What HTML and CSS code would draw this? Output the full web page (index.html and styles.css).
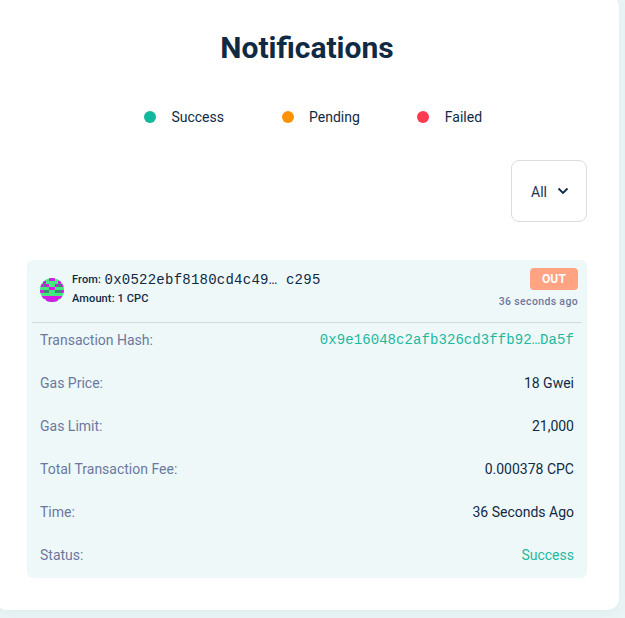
FILE: index.html
```html
<!DOCTYPE html>
<html lang="en">
<head>
<meta charset="utf-8">
<title>Notifications</title>
<link rel="stylesheet" href="styles.css">
</head>
<body>
<main class="panel">
  <h1>Notifications</h1>
  <div class="legend">
    <span class="legend-item success">Success</span>
    <span class="legend-item pending">Pending</span>
    <span class="legend-item failed">Failed</span>
  </div>
  <button class="filter">All
    <svg width="12" height="8" viewBox="0 0 12 8"><path d="M1.500 1.500 6 6l4.500-4.500" fill="none" stroke="#102a43" stroke-width="1.800"/></svg>
  </button>
  <section class="card">
    <header class="card-head">
      <svg class="avatar" viewBox="0 0 8 8" shape-rendering="crispEdges">
        <path fill="#43e87f" d="M0 0h8v8H0z"/>
        <path fill="#d61aea" d="M3 0h2v1H3zM1 1h1v1H1zM6 1h1v1H6zM0 2h1v1H0zM2 2h1v1H2zM5 2h1v1H5zM7 2h1v1H7zM3 3h2v1H3zM0 4h1v1H0zM7 4h1v1H7zM0 6h8v1H0zM2 7h4v1H2z"/>
        <path fill="#3c8a70" d="M1 2h1v1H1zM6 2h1v1H6zM1 4h2v1H1zM5 4h2v1H5z"/>
      </svg>
      <div class="summary">
        <div class="from"><span>From:</span> <span class="address">0x0522ebf8180cd4c49… c295</span></div>
        <div class="amount">Amount: 1 CPC</div>
      </div>
      <div class="meta">
        <span class="badge">OUT</span>
        <span class="age">36 seconds ago</span>
      </div>
    </header>
    <dl class="details">
      <div class="row"><dt>Transaction Hash:</dt><dd class="hash">0x9e16048c2afb326cd3ffb92…Da5f</dd></div>
      <div class="row"><dt>Gas Price:</dt><dd>18 Gwei</dd></div>
      <div class="row"><dt>Gas Limit:</dt><dd>21,000</dd></div>
      <div class="row"><dt>Total Transaction Fee:</dt><dd>0.000378 CPC</dd></div>
      <div class="row"><dt>Time:</dt><dd>36 Seconds Ago</dd></div>
      <div class="row"><dt>Status:</dt><dd class="ok">Success</dd></div>
    </dl>
  </section>
</main>
</body>
</html>
```

FILE: styles.css
```css
* { box-sizing: border-box; }
body {
  margin: 0;
  height: 618px;
  overflow: hidden;
  background: #eaf5f6;
  font: 14px/20px Roboto, sans-serif;
  color: #102a43;
}
.panel {
  width: 624px;
  height: 615px;
  margin: -5px 0 0 -5px;
  padding: 33px 32px 0;
  background: #fff;
  border-radius: 12px;
  box-shadow: 0 4px 16px rgba(16, 80, 90, 0.05);
  display: flex;
  flex-direction: column;
}
h1 {
  margin: 0;
  font-size: 30px;
  line-height: 40px;
  font-weight: 700;
  text-align: center;
}
.legend {
  display: flex;
  justify-content: center;
  gap: 57.5px;
  margin: 39px 0 0 12px;
}
.legend-item { display: flex; align-items: center; gap: 15.5px; }
.legend-item::before {
  content: "";
  width: 12px;
  height: 12px;
  border-radius: 50%;
  background: currentColor;
}
.success::before { background: #13b79b; }
.pending::before { background: #ff9203; }
.failed::before { background: #ff3b52; }
.filter {
  align-self: flex-end;
  width: 76px;
  height: 62px;
  margin-top: 33px;
  padding: 2px 0 0 2px;
  display: flex;
  align-items: center;
  justify-content: center;
  gap: 10px;
  border: 1px solid #dcdcdc;
  border-radius: 8px;
  background: #fff;
  color: #243054;
  font: inherit;
}
.filter svg { margin-top: -3px; }
.card {
  width: 560px;
  height: 318px;
  margin-top: 38px;
  padding: 0 5px;
  border-radius: 6px;
  background: #eff8f9;
}
.card-head {
  display: flex;
  height: 63px;
  padding: 8px 4px 0 8px;
  border-bottom: 1px solid #d5d9dc;
}
.avatar { width: 24px; height: 24px; margin-top: 10px; border-radius: 50%; }
.summary {
  margin-left: 8px;
  font-size: 11px;
  font-weight: 500;
  letter-spacing: 0.12px;
  white-space: nowrap;
}
.from { display: flex; gap: 3.5px; height: 21px; padding-top: 2px; }
.address {
  font: 14px/20px "Liberation Mono", monospace;
  letter-spacing: 0.24px;
}
.meta {
  margin-left: auto;
  display: flex;
  flex-direction: column;
  align-items: flex-end;
}
.badge {
  width: 48px;
  height: 22px;
  border-radius: 4px;
  background: #ffa383;
  color: #fff;
  font-size: 12px;
  line-height: 22px;
  font-weight: 700;
  letter-spacing: 0.2px;
  text-align: center;
}
.age {
  margin-top: 2px;
  color: #6b789e;
  font-size: 10.5px;
  font-weight: 500;
  letter-spacing: 0.35px;
}
.details { margin: 7px 8px 0; }
.row { display: flex; justify-content: space-between; height: 43px; }
dt { color: #6b789e; }
dd { margin: 0; }
.hash {
  font-family: "Liberation Mono", monospace;
  letter-spacing: 0.07px;
}
.hash, .ok { color: #1cb99f; }
```
